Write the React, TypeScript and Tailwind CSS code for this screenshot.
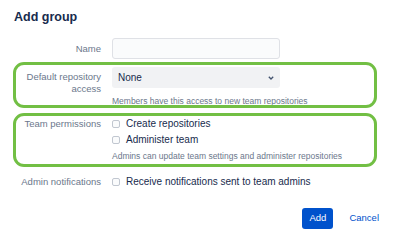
import React from "react";

function Box() {
  return (
    <span className="inline-block w-[8px] h-[8px] border border-[#c1c7d0] rounded-[2px] bg-[#fafbfc] shrink-0" />
  );
}

function Check({ label }: { label: string }) {
  return (
    <div className="flex items-center gap-[6px] h-[16px]">
      <Box />
      <span className="text-[10px] text-[#172b4d] leading-[16px]">{label}</span>
    </div>
  );
}

export default function App() {
  return (
    <div
      className="w-[397px] h-[243px] bg-white pl-[14px] pr-[20px] pt-[8px] overflow-hidden"
      style={{ fontFamily: '"Liberation Sans", Arial, sans-serif' }}
    >
      <h1 className="text-[12.5px] font-bold text-[#172b4d] leading-[18px]">Add group</h1>

      {/* Name */}
      <div className="grid grid-cols-[87px_1fr] gap-x-[11px] mt-[12px]">
        <div className="text-right text-[9.5px] text-[#6b778c] leading-[21px]">Name</div>
        <div className="w-[168px] h-[21px] border border-[#dfe1e6] rounded-[3px] bg-[#fafbfc]" />
      </div>

      {/* Default repository access */}
      <div className="relative mt-[8px]">
        <div className="grid grid-cols-[87px_1fr] gap-x-[11px]">
          <div className="text-right text-[9.5px] text-[#6b778c] leading-[12px] pt-[4px]">
            Default repository
            <br />
            access
          </div>
          <div>
            <div className="w-[168px] h-[21px] rounded-[3px] bg-[#f1f2f4] flex items-center justify-between pl-[6px] pr-[6px]">
              <span className="text-[10px] text-[#172b4d]">None</span>
              <svg width="6" height="4" viewBox="0 0 6 4">
                <path d="M0.8 0.8 L3 3 L5.2 0.8" fill="none" stroke="#42526e" strokeWidth="1.3" />
              </svg>
            </div>
            <div className="mt-[8px] text-[8.5px] text-[#6b778c] leading-[11px]">
              Members have this access to new team repositories
            </div>
          </div>
        </div>
        <div className="absolute left-[-1px] right-[0px] top-[-5px] bottom-[-1px] border-[3px] border-[#72bf44] rounded-[11px] pointer-events-none" />
      </div>

      {/* Team permissions */}
      <div className="relative mt-[9px]">
        <div className="grid grid-cols-[87px_1fr] gap-x-[11px]">
          <div className="text-right text-[9.5px] text-[#6b778c] leading-[16px]">Team permissions</div>
          <div>
            <Check label="Create repositories" />
            <Check label="Administer team" />
            <div className="mt-[3px] text-[8.5px] text-[#6b778c] leading-[11px]">
              Admins can update team settings and administer repositories
            </div>
          </div>
        </div>
        <div className="absolute left-[-1px] right-[0px] top-[-3px] bottom-[-5px] border-[3px] border-[#72bf44] rounded-[11px] pointer-events-none" />
      </div>

      {/* Admin notifications */}
      <div className="grid grid-cols-[87px_1fr] gap-x-[11px] mt-[12px]">
        <div className="text-right text-[9.5px] text-[#6b778c] leading-[16px]">Admin notifications</div>
        <Check label="Receive notifications sent to team admins" />
      </div>

      {/* Buttons */}
      <div className="flex justify-end items-center mt-[18px] mr-[-2px]">
        <button className="w-[31px] h-[21px] bg-[#0052cc] text-white text-[9.5px] rounded-[3px]">Add</button>
        <button className="ml-[16px] text-[#0052cc] text-[9.5px] h-[21px]">Cancel</button>
      </div>
    </div>
  );
}
